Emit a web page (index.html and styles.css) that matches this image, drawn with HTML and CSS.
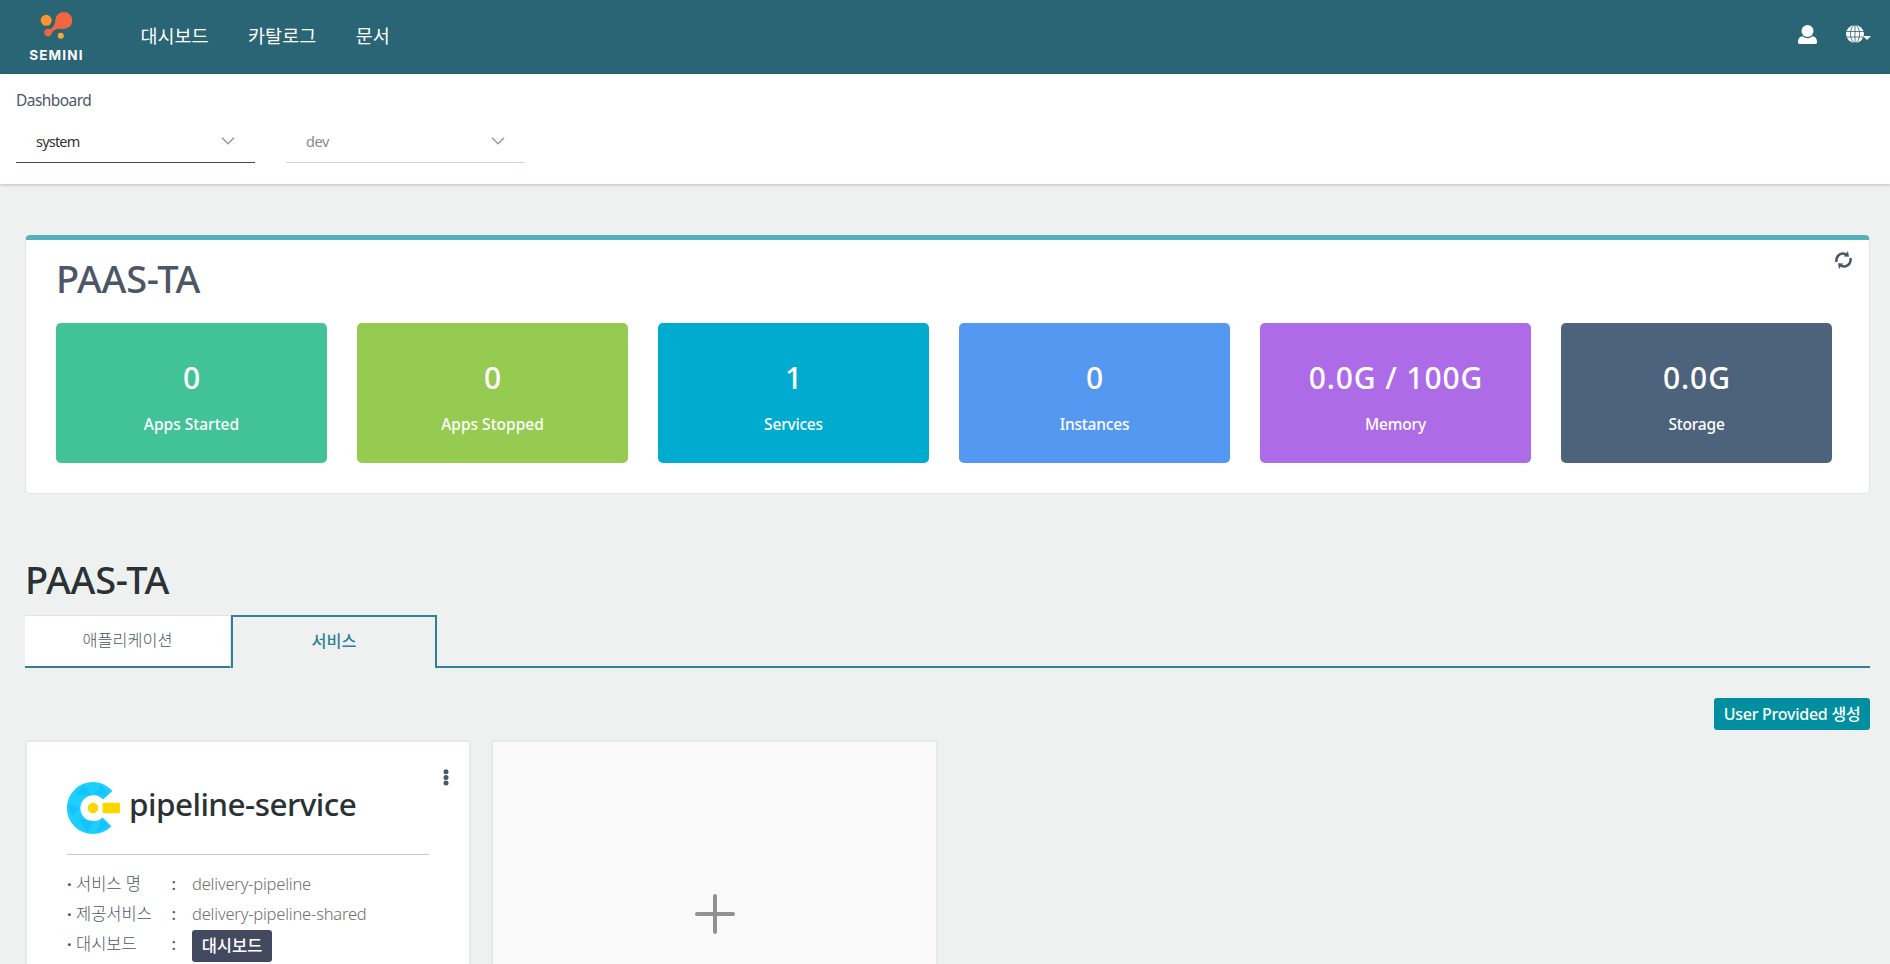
FILE: index.html
```html
<!DOCTYPE html>
<html lang="ko">
<head>
<meta charset="utf-8">
<title>PAAS-TA Dashboard</title>
<link rel="stylesheet" href="styles.css">
</head>
<body>
<header class="topbar">
  <a class="logo">
    <svg class="logo-mark" width="32" height="28" viewBox="0 0 32 28">
      <ellipse cx="6.2" cy="8.3" rx="5.5" ry="5.5" fill="#ff9430"/>
      <circle cx="23.8" cy="8.5" r="8.5" fill="#f0663f"/>
      <path d="M15.6 7 Q15.5 13 11 17 L7 17.5 L11.2 22 Q14 15.500 24 17 Z" fill="#f0663f"/>
      <circle cx="8" cy="20.500" r="3.700" fill="#f0663f"/>
      <circle cx="20.800" cy="23.800" r="3" fill="#ffa632"/>
    </svg>
    <span class="logo-text">SEMINI</span>
  </a>
  <nav class="nav"><a>대시보드</a><a>카탈로그</a><a>문서</a></nav>
  <div class="tools">
    <svg width="19" height="20" viewBox="0 0 19 20" fill="#fff"><circle cx="9.500" cy="6" r="6"/><path d="M4.500 11.300Q9.500 15 14.500 11.300Q19 12 19 17V17.500Q19 19 17 19H2Q0 19 0 17.500V17Q0 12 4.500 11.300Z"/></svg>
    <svg class="globe" width="25" height="20" viewBox="0 0 25 20"><circle cx="9" cy="9" r="9" fill="#fff"/><g fill="none" stroke="#2a6575" stroke-width=".8"><path d="M0 6.500H18M0 12H18M9 0V18"/><ellipse cx="9" cy="9" rx="4.500" ry="9"/></g><path d="M17 11H25L21 15Z" fill="#fff"/></svg>
  </div>
</header>
<section class="subbar">
  <div class="crumb">Dashboard</div>
  <div class="selects">
    <div class="select active"><span>system</span><svg width="14" height="8" viewBox="0 0 14 8"><path d="M1 .8L7 6.800L13 .8" fill="none" stroke="#999" stroke-width="1.500"/></svg></div>
    <div class="select"><span>dev</span><svg width="14" height="8" viewBox="0 0 14 8"><path d="M1 .8L7 6.800L13 .8" fill="none" stroke="#999" stroke-width="1.500"/></svg></div>
  </div>
</section>
<main class="content">
  <section class="panel">
    <div class="panel-head">
      <h2 class="heading">PAAS-TA</h2>
      <svg class="refresh" width="17" height="18" viewBox="0 0 17 18"><g fill="none" stroke="#4c5667" stroke-width="2.500"><path d="M1.400 11C.8 5 5.500 .8 11 3.300"/><path d="M15.600 7C16.200 13 11.500 17.200 6 14.700"/></g><path d="M13 0L14 5.800L8.800 5.600Z M4 18L3 12.200L8.200 12.400Z" fill="#4c5667"/></svg>
    </div>
    <div class="stats">
      <div class="stat green"><b>0</b><span>Apps Started</span></div>
      <div class="stat lime"><b>0</b><span>Apps Stopped</span></div>
      <div class="stat cyan"><b>1</b><span class="tight">Services</span></div>
      <div class="stat blue"><b>0</b><span class="tight">Instances</span></div>
      <div class="stat purple"><b>0.0G / 100G</b><span class="tight">Memory</span></div>
      <div class="stat slate"><b>0.0G</b><span class="tight">Storage</span></div>
    </div>
  </section>
  <h2 class="heading space-name">PAAS-TA</h2>
  <div class="tabs"><a class="tab">애플리케이션</a><a class="tab current">서비스</a><i class="tab-rest"></i></div>
  <div class="actions"><button class="btn create">User Provided 생성</button></div>
  <div class="cards">
    <article class="card">
      <div class="card-head">
        <svg width="54" height="54" viewBox="0 0 54 54">
          <path d="M45.500 9A26 26 0 1 0 44.500 44.200L35.500 35.500A13 13 0 1 1 36 17.500Z" fill="#1bd0ff"/>
          <path d="M17 1.800L9 13H25Z M35 2L27 12L40 14Z M1 22L13 26L5 34Z M12 37L20 51L28 39Z M35 36L29 50L43 45Z" fill="#14b9ff" opacity=".6"/>
          <circle cx="26" cy="26" r="5.300" fill="#ffd500"/><rect x="35.500" y="20.800" width="17.500" height="10.500" rx="1.500" fill="#ffd500"/>
        </svg>
        <h3>pipeline-service</h3>
      </div>
      <svg class="more" width="6" height="17" viewBox="0 0 6 17" fill="#4c5667"><circle cx="3" cy="2.700" r="2.500"/><circle cx="3" cy="8.400" r="2.500"/><circle cx="3" cy="14.100" r="2.500"/></svg>
      <dl class="info">
        <dt>서비스 명</dt><dd>delivery-pipeline</dd>
        <dt>제공서비스</dt><dd>delivery-pipeline-shared</dd>
        <dt>대시보드</dt><dd><button class="btn dash">대시보드</button></dd>
      </dl>
    </article>
    <article class="card add">
      <svg width="40" height="40" viewBox="0 0 40 40" stroke="#919191" stroke-width="4" stroke-linecap="round"><path d="M2 20H38M20 2V38"/></svg>
    </article>
  </div>
</main>
</body>
</html>
```
FILE: styles.css
```css
* { box-sizing: border-box; }
body {
  margin: 0;
  height: 964px;
  overflow: hidden;
  background: #eff1f0;
  color: #4c5667;
  font-family: "Noto Sans", "Noto Sans CJK KR", sans-serif;
  font-size: 16px;
}
h2, h3, dl, dd { margin: 0; }
svg { display: block; flex: none; }

.topbar { display: flex; height: 74px; background: #2a6575; color: #fff; }
.logo { width: 57px; margin-left: 28px; padding-top: 12px; display: flex; flex-direction: column; align-items: center; }
.logo-mark { margin-right: 2px; }
.logo-text { font: 700 13.500px/18px "Inter", sans-serif; letter-spacing: 1.200px; margin: 6px -4px 0; }
.nav { display: flex; gap: 39.500px; margin-left: 55.500px; line-height: 72px; font-size: 18.500px; }
.tools { display: flex; margin-left: auto; padding: 25px 19px 0 0; gap: 29px; }

.subbar { height: 110px; padding: 15px 16px 0; background: #fff; box-shadow: 0 1px 3px rgba(0, 0, 0, .22); }
.crumb { font-size: 15.500px; line-height: 22px; letter-spacing: -.55px; }
.selects { display: flex; gap: 31px; margin-top: 6px; }
.select { width: 239px; height: 46px; padding: 4px 20px 1px; display: flex; justify-content: space-between; align-items: center; border-bottom: 1px solid #ccd6dd; color: #888; font-size: 14.500px; letter-spacing: -.8px; }
.select:not(.active) { letter-spacing: -.4px; }
.select.active { border-color: #43495f; color: #333; }

.content { padding: 51px 20px 0 25px; }
.panel { height: 259px; border: 1px solid #e3e6e6; border-top: 5px solid #54b2bd; border-radius: 5px; background: #fff; padding: 0 36px 0 30px; }
.panel-head { display: flex; justify-content: space-between; height: 83px; padding-top: 12px; margin-right: -19px; }
.heading { font-size: 38px; line-height: 52px; font-weight: 500; letter-spacing: -.3px; }
.refresh { margin-top: -1px; }
.stats { display: grid; grid-template-columns: repeat(6, 271px); gap: 30px; }
.stat { height: 140px; border-radius: 5px; color: #fff; display: flex; flex-direction: column; align-items: center; padding-top: 34px; }
.stat b { font-size: 30px; line-height: 42px; font-weight: 500; letter-spacing: .9px; margin-right: -.9px; }
.stat span { font-size: 15.500px; line-height: 22px; font-weight: 500; margin-top: 14px; }
.stat .tight { letter-spacing: -.2px; }
.green { background: #41c397; }
.lime { background: #95cb51; }
.cyan { background: #00abd0; }
.blue { background: #5598f2; }
.purple { background: #ad6be8; }
.slate { background: #4d637c; }

.space-name { color: #2b3235; margin-top: 59px; }
.tabs { display: flex; margin-top: 10px; height: 53px; text-align: center; line-height: 47px; font-size: 16.300px; }
.tab { width: 206px; background: #fff; border-top: 1px solid #e3e3e3; border-right: 1px solid #e3e3e3; border-bottom: 2px solid #2f8198; font-family: "Noto Sans CJK KR", sans-serif; font-weight: 300; }
.tab.current { background: none; border: 2px solid #2f8198; border-bottom: 0; color: #2f8198; font-weight: 500; }
.tab-rest { flex: 1; border-bottom: 2px solid #2f8198; }

.actions { display: flex; justify-content: flex-end; margin-top: 30px; }
.btn { height: 32px; padding: 0; border: 0; border-radius: 3px; color: #fff; font: 500 16px/32px "Noto Sans", "Noto Sans CJK KR", sans-serif; text-align: center; display: block; }
.create { width: 156px; background: #008fa1; letter-spacing: -.25px; }
.cards { display: flex; gap: 20px; margin-top: 10px; }
.card { position: relative; width: 446px; height: 224px; background: #fff; border: 2px solid #e5e9ec; border-bottom: 0; padding: 40px 40px 0; }
.card-head { display: flex; gap: 8px; height: 73px; border-bottom: 1px solid #c9c9c9; }
.card h3 { font-size: 31.500px; font-weight: 500; line-height: 44px; color: #2b3235; letter-spacing: -.55px; }
.more { position: absolute; right: 20px; top: 27px; }
.info { display: grid; grid-template-columns: 125px 1fr; grid-auto-rows: 30px; line-height: 30px; margin-top: 14px; font-size: 16.500px; font-weight: 300; }
.info dt { display: flex; }
.info dt::before { content: "·"; font-weight: 700; width: 9px; }
.info dt::after { content: ":"; font-weight: 500; margin-left: auto; margin-right: 16px; }
.info dd { color: #707070; letter-spacing: -.2px; }
.dash { width: 80px; background: #43495f; font-size: 16.500px; margin-top: 1px; line-height: 30px; }
.add { width: 447px; background: #f9f9f9; display: flex; justify-content: center; align-items: flex-start; padding-top: 152px; }
```
